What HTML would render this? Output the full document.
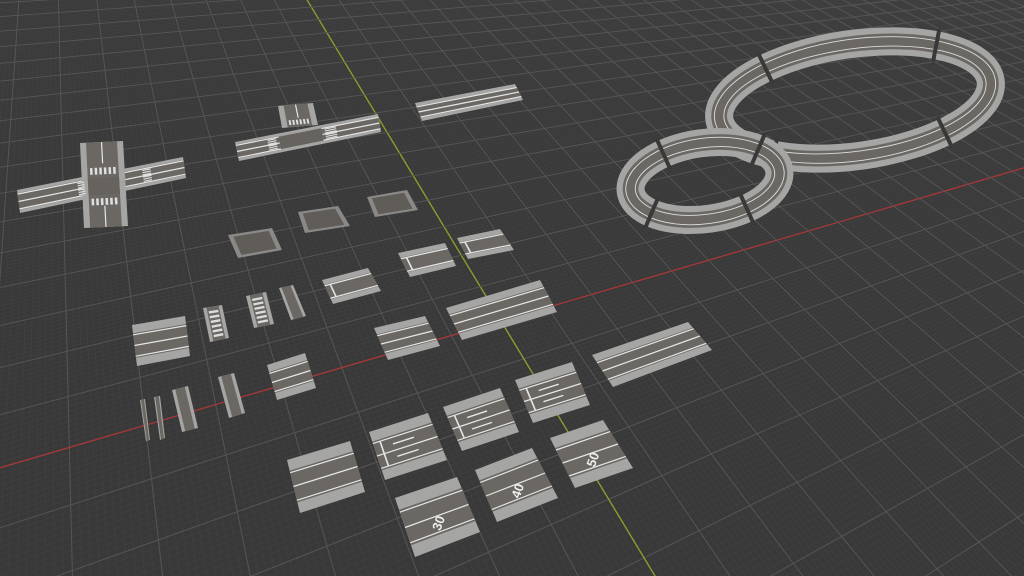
<!DOCTYPE html>
<html><head><meta charset="utf-8"><style>
html,body{margin:0;padding:0;background:#393939;overflow:hidden;width:1024px;height:576px}
svg{display:block;overflow:hidden}
</style></head><body>
<svg id="s" width="1024" height="576" viewBox="0 0 1024 576" xmlns="http://www.w3.org/2000/svg">
<rect width="1024" height="576" fill="#393939"/>
<g id="grid"></g>
<g id="tiles"></g>
</svg>
<script>
var NS="http://www.w3.org/2000/svg";
var G=document.getElementById('grid'),T=document.getElementById('tiles');
function el(p,tag,at){var e=document.createElementNS(NS,tag);for(var k in at)e.setAttribute(k,at[k]);p.appendChild(e);return e;}
var O=[501,321],V2=[2027,-126],V1=[48,-429];
var a=0.0315,b=0.048;
function H(u,v){var w=a*u+b*v+1;return [(a*u*V2[0]+b*v*V1[0]+O[0])/w,(a*u*V2[1]+b*v*V1[1]+O[1])/w];}
function gline(u0,v0,u1,v1,col,wd){var p=H(u0,v0),q=H(u1,v1);el(G,'line',{x1:p[0],y1:p[1],x2:q[0],y2:q[1],stroke:col,'stroke-width':wd});}
for(var pass=0;pass<2;pass++){
 for(var i=-400;i<=400;i++){
  var u=i/10;var major=(i%10===0);
  if(pass===0&&major)continue; if(pass===1&&!major)continue;
  var col=major?'#555':'#404040',wd=major?1:0.7;
  if(pass===1&&i===0){col='#8d9c2c';wd=1.4;}
  var vlo=(-(1+a*u)+0.03)/b; gline(u,vlo,u,300,col,wd);
  var v=u; var ulo=(-(1+b*v)+0.03)/a;
  var c2=col; if(pass===1&&i===0){c2='#a33838';}
  gline(ulo,v,300,v,c2,wd);
 }
}
function P(c,s,t){var x0=c[0][0]+(c[1][0]-c[0][0])*s,y0=c[0][1]+(c[1][1]-c[0][1])*s;var x1=c[3][0]+(c[2][0]-c[3][0])*s,y1=c[3][1]+(c[2][1]-c[3][1])*s;return [x0+(x1-x0)*t,y0+(y1-y0)*t];}
function quad(c,s0,s1,t0,t1,fill){var p=[P(c,s0,t0),P(c,s1,t0),P(c,s1,t1),P(c,s0,t1)];el(T,'polygon',{points:p.map(function(q){return q.join(',')}).join(' '),fill:fill});}
function ln(c,s0,t0,s1,t1,w){var p=P(c,s0,t0),q=P(c,s1,t1);el(T,'line',{x1:p[0],y1:p[1],x2:q[0],y2:q[1],stroke:'#e6e6e6','stroke-width':w||1.2});}
var SW='#a5a5a3',AS='#6b6864';
function road(c,lanes,opt){opt=opt||{};quad(c,0,1,0,1,SW);var e=opt.e||0.2;quad(c,0,1,e,1-e,AS);
 ln(c,0,e+0.04,1,e+0.04);ln(c,0,1-e-0.04,1,1-e-0.04);
 (lanes||[]).forEach(function(t){ln(c,0,t,1,t);});
 if(opt.stop){ln(c,0.12,e+0.04,0.12,1-e-0.04,1.6);}
 if(opt.arrows){opt.arrows.forEach(function(t){ln(c,0.3,t,0.65,t,1.4);});}
}
function zebraV(c,s0,s1,t0,t1){for(var k=0;k<6;k++){var s=s0+(s1-s0)*(k+0.2)/6;quad(c,s,s+(s1-s0)*0.09,t0,t1,'#dedede');}}
function zebraH(c,s0,s1,t0,t1){for(var k=0;k<6;k++){var t=t0+(t1-t0)*(k+0.2)/6;quad(c,s0,s1,t,t+(t1-t0)*0.09,'#dedede');}}
function txt(c,s,t,str,rot,fs){var p=P(c,s,t);var e=el(T,'text',{x:p[0],y:p[1],fill:'#eee','font-size':fs||11,'font-family':'Liberation Sans, sans-serif','font-weight':'bold','text-anchor':'middle','dominant-baseline':'middle',transform:'rotate('+rot+' '+p[0]+' '+p[1]+')'});e.textContent=str;}
var CH=[[17,190],[183,157],[186,178],[20,213]];
var CV=[[80,143],[123,141],[128,226],[84,228]];
road(CH,[0.5],{e:0.14});
quad(CV,0,1,0,1,SW);quad(CV,0.14,0.86,0,1,AS);
ln(CV,0.5,0,0.5,0.25);ln(CV,0.5,0.75,0.5,1);
quad(CV,0.14,0.86,0.42,0.62,'#66635f');
zebraV(CV,0.18,0.82,0.3,0.38);zebraV(CV,0.18,0.82,0.66,0.74);
zebraH(CH,0.36,0.4,0.2,0.8);zebraH(CH,0.75,0.8,0.2,0.8);
var TH=[[235,142],[378,114],[381,132],[239,161]];
var TV=[[278,106],[313,103],[318,125],[282,128]];
road(TH,[0.5],{e:0.14});
quad(TV,0,1,0,1,SW);quad(TV,0.16,0.84,0,1,AS);ln(TV,0.5,0,0.5,0.6);
zebraV(TV,0.2,0.8,0.68,0.9);
quad(TH,0.3,0.6,0.16,0.84,'#66635f');
zebraH(TH,0.22,0.28,0.2,0.8);zebraH(TH,0.62,0.7,0.2,0.8);
road([[415,103],[515,84],[523,100],[422,121]],[0.5],{e:0.18});
[[[228,235],[272,228],[282,250],[238,258]],[[298,212],[338,206],[350,226],[305,233]],[[367,197],[407,190],[418,210],[375,217]]].forEach(function(c){quad(c,0,1,0,1,'#8a8987');quad(c,0.1,0.9,0.1,0.9,'#605d59');});
road([[398,253],[445,243],[456,266],[410,277]],[],{stop:true});
road([[457,238],[500,229],[514,250],[468,259]],[],{stop:true});
road([[322,280],[368,268],[381,291],[333,304]],[],{stop:true});
road([[132,325],[185,316],[190,356],[137,366]],[0.5]);
[[[203,308],[222,305],[229,338],[210,342]],[[246,296],[266,292],[274,324],[254,328]],[[279,288],[293,285],[306,316],[291,320]]].forEach(function(c,k){quad(c,0,1,0,1,SW);quad(c,0.18,0.82,0,1,AS);if(k<2)for(var t=0.12;t<0.9;t+=0.14)quad(c,0.25,0.75,t,t+0.07,'#dcdcdc');});
road([[446,308],[540,280],[557,312],[462,340]],[0.5]);
road([[374,328],[425,316],[440,346],[388,360]],[0.5]);
road([[592,355],[688,322],[712,350],[613,387]],[0.5]);
[[[140,400],[145,399],[150,440],[146,441]],[[154,397],[160,396],[165,438],[160,440]],[[172,390],[188,386],[198,428],[182,432]],[[218,377],[234,373],[245,413],[229,418]]].forEach(function(c){quad(c,0,1,0,1,SW);quad(c,0.2,0.8,0,1,AS);});
road([[267,365],[305,353],[316,388],[277,400]],[0.5]);
var A=[[287,460],[350,441],[365,492],[300,513]];road(A,[0.5]);
var B=[[369,432],[428,413],[447,460],[385,480]];road(B,[0.5],{stop:true,arrows:[0.37,0.63]});
var C=[[443,407],[500,388],[519,432],[462,451]];road(C,[0.5],{stop:true,arrows:[0.37,0.63]});
var D=[[515,380],[572,362],[590,405],[533,423]];road(D,[0.5],{stop:true,arrows:[0.37,0.63]});
var E=[[395,498],[457,477],[480,532],[415,557]];road(E,[0.5]);txt(E,0.5,0.63,'30',-70,13);
var F=[[475,470],[532,448],[558,498],[497,522]];road(F,[0.5]);txt(F,0.5,0.63,'40',-70,13);
var Gt=[[550,438],[603,420],[633,468],[575,488]];road(Gt,[0.5]);txt(Gt,0.5,0.63,'50',-70,13);
function ring(cx,cy,rx,ry,sw,rot,gaps){var g=el(T,'g',{transform:'rotate('+rot+' '+cx+' '+cy+')'});
 el(g,'ellipse',{cx:cx,cy:cy,rx:rx,ry:ry,fill:'none',stroke:SW,'stroke-width':sw});
 el(g,'ellipse',{cx:cx,cy:cy,rx:rx,ry:ry,fill:'none',stroke:AS,'stroke-width':sw*0.56});
 el(g,'ellipse',{cx:cx,cy:cy,rx:rx+sw*0.17,ry:ry+sw*0.17,fill:'none',stroke:'#ddd','stroke-width':0.9});
 el(g,'ellipse',{cx:cx,cy:cy,rx:rx-sw*0.17,ry:ry-sw*0.17,fill:'none',stroke:'#ddd','stroke-width':0.9});
 gaps.forEach(function(d){var r=d*Math.PI/180,c=Math.cos(r),s=Math.sin(r);
  var nx=c/rx,ny=s/ry,nl=Math.hypot(nx,ny);nx/=nl;ny/=nl;var x=cx+rx*c,y=cy-ry*s;
  el(g,'line',{x1:x-nx*sw*0.6,y1:y+ny*sw*0.6,x2:x+nx*sw*0.6,y2:y-ny*sw*0.6,stroke:'#393939','stroke-width':4});});
}
ring(855,100,137,56,28,-8,[50,128,230,308]);
ring(705,181,75,38,28,-8,[40,120,220,300]);
</script>
</body></html>
